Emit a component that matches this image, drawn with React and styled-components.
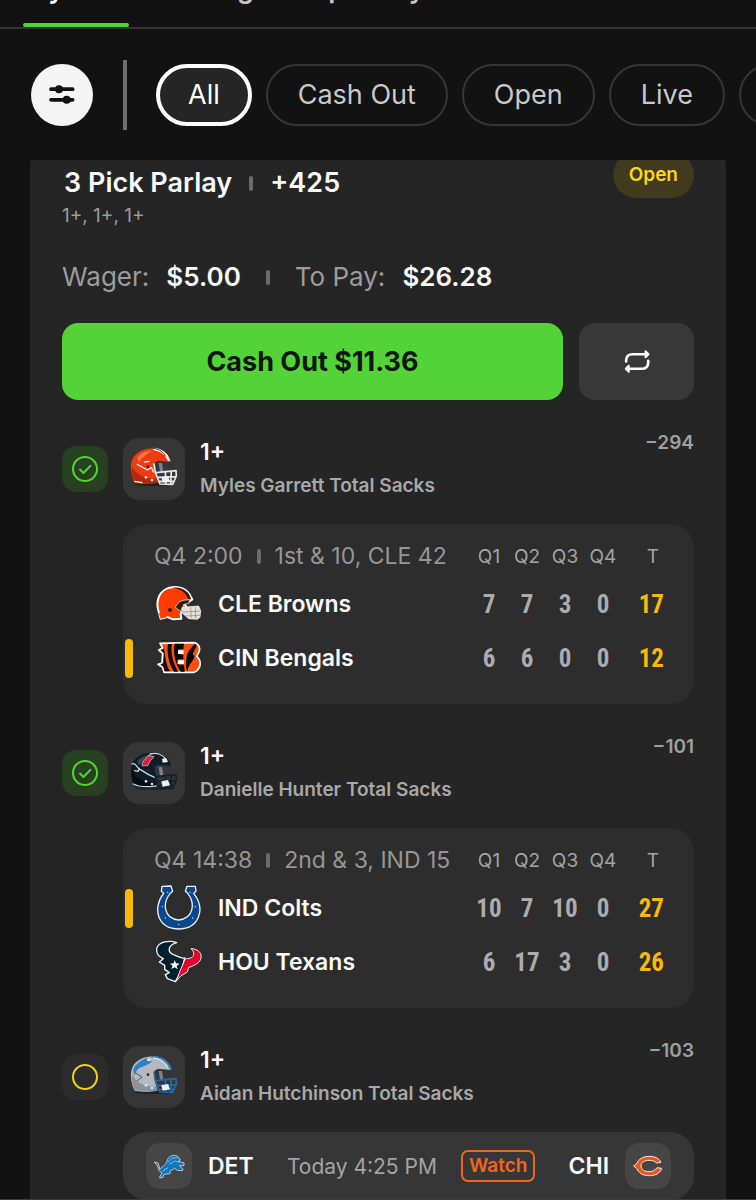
import React from "react";
import styled, { createGlobalStyle } from "styled-components";

const GlobalStyle = createGlobalStyle`
  *, *::before, *::after { box-sizing: border-box; }
  body {
    margin: 0;
    background: #121212;
    color: #fafafa;
    font-family: Inter, "Liberation Sans", sans-serif;
  }
  button { font: inherit; color: inherit; border: 0; padding: 0; background: none; cursor: pointer; }
  svg { display: block; flex: none; }
`;

const Shell = styled.div`
  display: flex;
  flex-direction: column;
  height: 100vh;
  overflow: hidden;
  border-bottom: 1px solid #3c3c3c;
`;

const Tabs = styled.nav`
  display: flex;
  flex: none;
  gap: 24px;
  height: 60px;
  margin-top: -31px;
  padding-left: 23px;
  border-bottom: 2px solid #343434;
`;

const Tab = styled.button`
  display: flex;
  flex-direction: column;
  justify-content: space-between;
  font-size: 27px;
  line-height: 32px;
  font-weight: 600;
  white-space: nowrap;
  padding-top: 4px;
  color: ${(p) => (p.$active ? "#ffffff" : "#c4c4c4")};

  &::after {
    content: "";
    width: 100%;
    height: 4px;
    border-radius: 2px;
    background: ${(p) => (p.$active ? "#53d337" : "transparent")};
  }
`;

const Filters = styled.div`
  display: flex;
  flex: none;
  align-items: center;
  height: 131px;
  padding-left: 31px;
  overflow: hidden;
`;

const FilterButton = styled.button`
  display: grid;
  place-items: center;
  flex: none;
  width: 62px;
  height: 62px;
  border-radius: 50%;
  background: #f5f5f5;
  color: #121212;
`;

const FilterDivider = styled.div`
  flex: none;
  width: 4px;
  height: 70px;
  margin: 0 29px 0 30px;
  background: #6e6e6e;
`;

const Chips = styled.div`
  display: flex;
  gap: 14px;
`;

const Chip = styled.button`
  flex: none;
  height: 62px;
  padding: 0 ${(p) => (p.$active ? 28 : 30)}px;
  border: ${(p) => (p.$active ? "4px solid #ffffff" : "2px solid #363636")};
  border-radius: 31px;
  background: ${(p) => (p.$active ? "#262626" : "transparent")};
  color: ${(p) => (p.$active ? "#ffffff" : "#c8c8c8")};
  font-size: 27px;
  line-height: 32px;
  font-weight: 400;
`;

const Feed = styled.main`
  flex: 1;
  min-height: 0;
  overflow: hidden;
  padding: 0 30px;
`;

const BetCard = styled.article`
  margin-top: -17px;
  padding: 9px 32px 32px;
  border-radius: 24px;
  background: #252525;
`;

const CardHead = styled.header`
  display: flex;
  justify-content: space-between;
  align-items: flex-start;
`;

const Headline = styled.h1`
  display: flex;
  align-items: center;
  gap: 17px;
  margin: 0;
  padding: 15px 2px 0;
  font-size: 27px;
  line-height: 32px;
  font-weight: 600;
`;

const Separator = styled.span`
  width: 4px;
  height: 15px;
  border-radius: 2px;
  background: #6c6c6c;
`;

const StatusBadge = styled.span`
  padding: 7px 16px;
  border-radius: 23px;
  background: #423a1c;
  color: #fbd519;
  font-size: 19px;
  line-height: 32px;
  font-weight: 600;
`;

const Picks = styled.p`
  margin: 5px 0 0;
  font-size: 19px;
  line-height: 24px;
  font-weight: 400;
  color: #9c9c9c;
`;

const Stakes = styled.dl`
  display: flex;
  align-items: center;
  gap: 25px;
  margin: 33px 0 30px;
  font-size: 26px;
  line-height: 32px;
`;

const Stake = styled.div`
  display: flex;
  align-items: baseline;
  gap: 17px;
`;

const StakeLabel = styled.dt`
  font-weight: 400;
  color: #9c9c9c;
`;

const StakeValue = styled.dd`
  margin: 0;
  font-weight: 600;
`;

const Actions = styled.div`
  display: flex;
  gap: 16px;
  height: 77px;
`;

const CashOut = styled.button`
  flex: 1;
  border-radius: 16px;
  background: #53d337;
  color: #0d160b;
  font-size: 27px;
  font-weight: 700;
`;

const RepeatButton = styled.button`
  display: grid;
  place-items: center;
  width: 115px;
  border-radius: 16px;
  background: #383838;
`;

const Leg = styled.section`
  margin-top: 38px;
`;

const LegHead = styled.div`
  display: flex;
  align-items: center;
  gap: 15px;
  height: 62px;
`;

const LegState = styled.span`
  display: grid;
  place-items: center;
  flex: none;
  width: 46px;
  height: 46px;
  border-radius: 14px;
  background: ${(p) => (p.$won ? "#264020" : "#2c2c2c")};
`;

const HelmetTile = styled.span`
  flex: none;
  width: 62px;
  height: 62px;
  border-radius: 16px;
  background: #363636;
`;

const LegText = styled.div`
  flex: 1;
`;

const LegPick = styled.h2`
  margin: 0;
  font-size: 23px;
  line-height: 33px;
  font-weight: 600;
`;

const LegMarket = styled.p`
  margin: 0;
  font-size: 19px;
  line-height: 33px;
  font-weight: 600;
  color: #a8a8a8;
`;

const Odds = styled.span`
  align-self: flex-start;
  margin-top: -7px;
  font-size: 19px;
  line-height: 24px;
  font-weight: 600;
  color: #a0a0a0;
`;

const Game = styled.div`
  margin: 24px 0 0 61px;
  padding: 11px 30px 19px 0;
  border-radius: 24px;
  background: #2d2d2d;
`;

const Score = styled.table`
  width: 100%;
  border-collapse: collapse;
  table-layout: fixed;

  th, td { padding: 0; text-align: center; white-space: nowrap; }
`;

const PeriodCol = styled.col`
  width: 38px;
`;

const TotalCol = styled.col`
  width: 42px;
`;

const Clock = styled.div`
  display: flex;
  align-items: center;
  gap: 14px;
  height: 42px;
  padding-left: 31px;
  font-size: 23px;
  font-weight: 400;
  color: #969696;
`;

const Period = styled.th`
  font-size: 19px;
  font-weight: 400;
  color: #a4a4a4;
`;

const TotalHead = styled(Period)`
  && { text-align: right; padding-right: 5px; }
`;

const Team = styled.div`
  display: flex;
  align-items: center;
  height: 54px;
  font-size: 23px;
  font-weight: 600;
`;

const Possession = styled.span`
  width: 8px;
  height: 39px;
  margin: 0 21px 0 2px;
  border-radius: 4px;
  background: ${(p) => (p.$on ? "#f8b90c" : "transparent")};
`;

const TeamName = styled.span`
  margin-left: 16px;
`;

const Points = styled.td`
  font-family: "Liberation Sans Narrow", "Roboto Condensed", "DejaVu Sans Condensed", sans-serif;
  font-size: 25px;
  font-weight: 700;
  color: #acacac;
`;

const Total = styled(Points)`
  && { text-align: right; }
  color: #f8b90c;
`;

const Upcoming = styled.div`
  display: flex;
  align-items: center;
  justify-content: space-between;
  height: 68px;
  margin: 24px 0 0 61px;
  padding: 0 23px;
  border-radius: 24px;
  background: #363636;
`;

const Side = styled.div`
  display: flex;
  align-items: center;
  gap: 16px;
  font-size: 23px;
  font-weight: 600;
`;

const LogoTile = styled.span`
  width: 46px;
  height: 46px;
  border-radius: 14px;
  background: #464646;
`;

const Kickoff = styled.div`
  display: flex;
  align-items: center;
  gap: 24px;
  font-size: 21px;
  font-weight: 400;
  color: #a4a4a4;
`;

const Watch = styled.button`
  height: 32px;
  padding: 0 6px;
  border: 2px solid #f2651f;
  border-radius: 7px;
  color: #f2651f;
  font-size: 19px;
  line-height: 28px;
  font-weight: 600;
`;

const SlidersIcon = () => (
  <svg width="26" height="21" viewBox="146 252 78 62" fill="currentColor" stroke="currentColor" strokeWidth="11" strokeLinecap="round" aria-hidden="true">
    <path d="M152 267H217M152 299H217" />
    <circle cx="176" cy="267" r="12" stroke="none" />
    <circle cx="199" cy="299" r="12" stroke="none" />
  </svg>
);

const RepeatIcon = () => (
  <svg width="26" height="25" viewBox="191 116 78 76" fill="none" stroke="currentColor" strokeWidth="8" strokeLinecap="round" strokeLinejoin="round" aria-hidden="true">
    <path d="M197 154V150Q198 132 216 132H256M264 152V158Q263 176 245 176H206" />
    <path d="M256 123L265 132L256 141ZM205 167L196 176L205 185Z" fill="currentColor" strokeWidth="6" />
  </svg>
);

const StateIcon = ({ won }) => (
  <svg width="26" height="26" viewBox="0 0 26 26" fill="none" stroke={won ? "#53d337" : "#f4cf14"} strokeWidth="2" strokeLinecap="round" strokeLinejoin="round" role="img" aria-label={won ? "Won" : "Open"}>
    <circle cx="13" cy="13" r="12" />
    {won && <path d="M8 13.5L11.5 17L18.5 9.8" />}
  </svg>
);

const helmets = {
  browns: { shell: "#ee3b12", shade: "#b52a0c", shine: "#ff7444", mask: "#e9e9e9" },
  texans: { shell: "#0c1c28", shade: "#050b12", shine: "#34495a", mask: "#10202e" },
  lions: { shell: "#b4bac0", shade: "#8b939b", shine: "#e6eaee", mask: "#2a66a4" },
};

const Helmet = ({ team }) => {
  const c = helmets[team];
  return (
    <svg width="62" height="62" viewBox="219 54 186 186" fill="none" strokeLinecap="round" strokeLinejoin="round" aria-hidden="true">
      <ellipse cx="312" cy="193" rx="58" ry="5" fill="#222" />
      <path d="M254 188C243 168 238 136 248 116C260 94 292 81 322 86C346 91 361 106 363 126L322 122L312 134L314 156L322 188L290 192L262 190Z" fill={c.shell} />
      <path d="M254 186C245 168 243 150 247 140C258 164 282 176 318 176L322 188L290 192Z" fill={c.shade} />
      <path d="M262 112C272 98 290 92 306 92C292 100 276 112 266 126Z" fill={c.shine} />
      <path d="M314 126L358 126L362 152L342 160L316 154Z" fill="#33363b" />
      <path d="M326 129L336 129L340 154L330 156Z" fill="#7c8288" />
      {team === "browns" && (
        <g>
          <path d="M312 87C336 90 350 102 356 120" stroke="#fff" strokeWidth="7" />
          <path d="M310 85C330 88 340 96 346 108" stroke="#4b2013" strokeWidth="3" />
          <path d="M262 133L292 150L304 142L310 156M284 126L298 124M254 184L276 188" stroke="#f8ece8" strokeWidth="4" />
        </g>
      )}
      {team === "texans" && (
        <g>
          <path d="M246 120C258 114 258 130 268 134L264 142L254 140M300 90C320 84 340 92 350 108M270 136L296 152L314 160M250 180C270 192 300 188 318 186" stroke="#ccd7df" strokeWidth="4" />
          <path d="M276 124C278 104 292 106 294 94L312 98C306 108 302 104 294 124Z" fill="#d5233c" stroke="#f1dadd" strokeWidth="2" />
          <path d="M336 104L348 102L354 114L338 116Z" fill="#e8edf0" />
        </g>
      )}
      {team === "lions" && (
        <g>
          <path d="M250 124C256 108 272 96 292 90C286 100 298 102 308 98C298 110 282 112 270 120C262 124 256 132 252 144Z" fill="#2f82c4" />
          <path d="M306 86C334 86 354 102 362 122" stroke="#2f82c4" strokeWidth="6" />
          <path d="M310 90C332 92 344 102 352 118" stroke="#f3f5f7" strokeWidth="3" />
          <path d="M256 134L276 148L262 158" stroke="#51595f" strokeWidth="3" />
        </g>
      )}
      <path d="M312 132L316 158L330 192L368 193L379 168L378 152L318 158M324 172L378 170M346 154L348 192M364 154L362 192M326 184L372 184" stroke={c.mask} strokeWidth="5" />
      <path d="M334 172L354 168L360 184L338 188Z" fill="#f0f0f0" />
      <circle cx="288" cy="172" r="4" fill="#e4e4e4" />
      <circle cx="306" cy="180" r="4" fill="#e4e4e4" />
      <circle cx="294" cy="140" r="4" fill="#2b2b2b" />
    </svg>
  );
};

const BrownsLogo = () => (
  <svg width="48" height="48" viewBox="132 180 144 144" strokeLinejoin="round" aria-hidden="true">
    <path d="M152 296L144 268C138 240 148 212 178 203C206 196 234 206 243 232L247 238L236 246L222 250L230 262L212 280L214 296L190 298L172 291Z" fill="#ff3c00" stroke="#fff" strokeWidth="6" />
    <path d="M188 203C214 200 236 212 243 236L234 238C230 220 214 206 188 203Z" fill="#38180b" />
    <path d="M196 262C204 244 218 238 240 240L236 250L220 254L218 276L206 270Z" fill="#35190f" stroke="#fff" strokeWidth="2" />
    <path d="M152 296L146 278L172 291Z" fill="#ff3c00" />
    <circle cx="180" cy="270" r="6" fill="#38180b" />
    <path d="M216 262L240 260L266 258L272 272L270 292L262 298L236 296L224 286L214 276Z" fill="#e4e0da" stroke="#fff" strokeWidth="2" />
    <path d="M194 264L222 276L270 273M226 288L270 286M242 262L244 294M256 262L257 296" fill="none" stroke="#8c8075" strokeWidth="2" />
  </svg>
);

const BengalsLogo = () => (
  <svg width="48" height="48" viewBox="132 342 144 144" strokeLinejoin="round" aria-hidden="true">
    <path d="M150 370L248 368C268 369 274 386 264 402L260 409C274 420 274 440 260 453L252 457L162 457L158 442L144 433L156 430L158 400L146 390L158 384Z" fill="#fb4f14" stroke="#fff" strokeWidth="5" />
    <path d="M160 374C166 398 164 430 180 454L164 454L160 440L152 433L160 430L162 400L152 390L162 386ZM174 372L186 372C180 398 190 430 204 455L192 455C176 430 170 398 174 372ZM194 371L222 371L220 388L206 388L206 402L220 404L220 418L205 418L206 434L222 434L224 455L212 455C196 430 188 398 194 371ZM254 371C246 382 232 392 230 412C228 428 226 440 232 455C234 435 248 428 254 408C240 402 258 390 260 374Z" fill="#090909" />
    <path d="M204 391H221V402H204ZM203 421H222V432H203Z" fill="#fff" />
  </svg>
);

const ColtsLogo = () => (
  <svg width="48" height="48" viewBox="132 162 144 144" strokeLinejoin="round" aria-hidden="true">
    <path d="M156 169L183 168L188 184L181 190C157 218 160 266 206 270C252 266 256 218 233 190L226 184L231 169L256 169L258 184L251 190C270 214 274 240 265 262C255 286 234 297 206 297C178 297 157 286 147 262C139 240 143 212 161 190L154 184Z" fill="#0a478c" stroke="#e9eef4" strokeWidth="4" />
    <g fill="#dfe8f2">
      <circle cx="173" cy="187" r="2" /><circle cx="157" cy="230" r="2" /><circle cx="166" cy="264" r="2" /><circle cx="206" cy="284" r="2" />
      <circle cx="248" cy="264" r="2" /><circle cx="256" cy="230" r="2" /><circle cx="240" cy="187" r="2" />
    </g>
  </svg>
);

const TexansLogo = () => (
  <svg width="48" height="48" viewBox="132 324 144 144" strokeLinejoin="round" aria-hidden="true">
    <path d="M200 338C178 330 146 334 140 356C138 374 148 380 160 386L148 396L164 406L164 418L178 428L166 434L172 446L196 455L214 425L224 384C210 386 204 378 190 374C172 366 172 346 200 338Z" fill="#03202f" stroke="#f3f3f3" strokeWidth="4" />
    <path d="M226 386C246 388 262 374 243 356C262 356 276 368 273 384C270 400 254 404 244 410L236 412L232 426L212 438L198 454C206 430 216 410 226 386Z" fill="#e4002b" stroke="#f3f3f3" strokeWidth="3" />
    <path d="M194 390L198 400L209 401L200 408L203 418L194 412L184 417L188 407L180 401L191 400Z" fill="#fff" />
  </svg>
);

const LionsLogo = () => (
  <svg width="46" height="46" viewBox="110 66 138 138" strokeLinejoin="round" aria-hidden="true">
    <path d="M135 123L146 126L152 144C160 134 172 132 174 116C182 101 198 100 207 108L213 117L207 121L224 126L224 134L210 134L221 144L220 149L204 148L196 142L182 150L182 158L164 160L160 170L150 170L158 156L150 150L144 134Z" fill="#1077bd" stroke="#b9c3cb" strokeWidth="3" />
    <path d="M176 124L188 112L204 110M180 130L196 120L210 124M160 150L176 140" fill="none" stroke="#b9dcf3" strokeWidth="2" />
  </svg>
);

const BearsLogo = () => (
  <svg width="46" height="46" viewBox="558 97 138 138" strokeLinejoin="round" aria-hidden="true">
    <path d="M666 155C660 142 646 137 630 137C612 137 598 146 593 159L584 166L593 173C598 187 612 195 630 195C650 195 664 188 668 173L654 171C648 179 642 183 630 183C616 183 606 176 606 166C606 156 616 149 630 149C642 149 648 152 652 157Z" fill="#e8581c" stroke="#f4e9e2" strokeWidth="3" />
  </svg>
);

const logos = { browns: BrownsLogo, bengals: BengalsLogo, colts: ColtsLogo, texans: TexansLogo };

const periods = ["Q1", "Q2", "Q3", "Q4"];

const liveLegs = [
  {
    helmet: "browns", market: "Myles Garrett Total Sacks", odds: "−294", clock: "Q4 2:00", down: "1st & 10, CLE 42",
    teams: [
      { logo: "browns", name: "CLE Browns", points: [7, 7, 3, 0], total: 17 },
      { logo: "bengals", name: "CIN Bengals", points: [6, 6, 0, 0], total: 12, ball: true },
    ],
  },
  {
    helmet: "texans", market: "Danielle Hunter Total Sacks", odds: "−101", clock: "Q4 14:38", down: "2nd & 3, IND 15",
    teams: [
      { logo: "colts", name: "IND Colts", points: [10, 7, 10, 0], total: 27, ball: true },
      { logo: "texans", name: "HOU Texans", points: [6, 17, 3, 0], total: 26 },
    ],
  },
];

const LegHeader = ({ won, helmet, market, odds }) => (
  <LegHead>
    <LegState $won={won}><StateIcon won={won} /></LegState>
    <HelmetTile><Helmet team={helmet} /></HelmetTile>
    <LegText>
      <LegPick>1+</LegPick>
      <LegMarket>{market}</LegMarket>
    </LegText>
    <Odds>{odds}</Odds>
  </LegHead>
);

const Scoreboard = ({ clock, down, teams }) => (
  <Game>
    <Score>
      <colgroup>
        <col />
        {periods.map((p) => <PeriodCol key={p} />)}
        <TotalCol />
      </colgroup>
      <thead>
        <tr>
          <th scope="col">
            <Clock><span>{clock}</span><Separator /><span>{down}</span></Clock>
          </th>
          {periods.map((p) => <Period key={p} scope="col">{p}</Period>)}
          <TotalHead scope="col">T</TotalHead>
        </tr>
      </thead>
      <tbody>
        {teams.map((t) => {
          const Logo = logos[t.logo];
          return (
            <tr key={t.name}>
              <th scope="row">
                <Team><Possession $on={t.ball} /><Logo /><TeamName>{t.name}</TeamName></Team>
              </th>
              {t.points.map((n, i) => <Points key={periods[i]}>{n}</Points>)}
              <Total>{t.total}</Total>
            </tr>
          );
        })}
      </tbody>
    </Score>
  </Game>
);

export default function App() {
  return (
    <Shell>
      <GlobalStyle />
      <Tabs>
        <Tab $active>My Bets</Tab>
        <Tab>Sharing</Tab>
        <Tab>Shop</Tab>
        <Tab>Play</Tab>
      </Tabs>
      <Filters>
        <FilterButton aria-label="Filters"><SlidersIcon /></FilterButton>
        <FilterDivider />
        <Chips>
          <Chip $active>All</Chip>
          <Chip>Cash Out</Chip>
          <Chip>Open</Chip>
          <Chip>Live</Chip>
          <Chip>Settled</Chip>
        </Chips>
      </Filters>
      <Feed>
        <BetCard>
          <CardHead>
            <Headline><span>3 Pick Parlay</span><Separator /><span>+425</span></Headline>
            <StatusBadge>Open</StatusBadge>
          </CardHead>
          <Picks>1+, 1+, 1+</Picks>
          <Stakes>
            <Stake><StakeLabel>Wager:</StakeLabel><StakeValue>$5.00</StakeValue></Stake>
            <Separator />
            <Stake><StakeLabel>To Pay:</StakeLabel><StakeValue>$26.28</StakeValue></Stake>
          </Stakes>
          <Actions>
            <CashOut>Cash Out $11.36</CashOut>
            <RepeatButton aria-label="Bet again"><RepeatIcon /></RepeatButton>
          </Actions>
          {liveLegs.map((leg) => (
            <Leg key={leg.market}>
              <LegHeader won helmet={leg.helmet} market={leg.market} odds={leg.odds} />
              <Scoreboard clock={leg.clock} down={leg.down} teams={leg.teams} />
            </Leg>
          ))}
          <Leg>
            <LegHeader helmet="lions" market="Aidan Hutchinson Total Sacks" odds="−103" />
            <Upcoming>
              <Side><LogoTile><LionsLogo /></LogoTile>DET</Side>
              <Kickoff>Today 4:25 PM<Watch>Watch</Watch></Kickoff>
              <Side>CHI<LogoTile><BearsLogo /></LogoTile></Side>
            </Upcoming>
          </Leg>
        </BetCard>
      </Feed>
    </Shell>
  );
}
